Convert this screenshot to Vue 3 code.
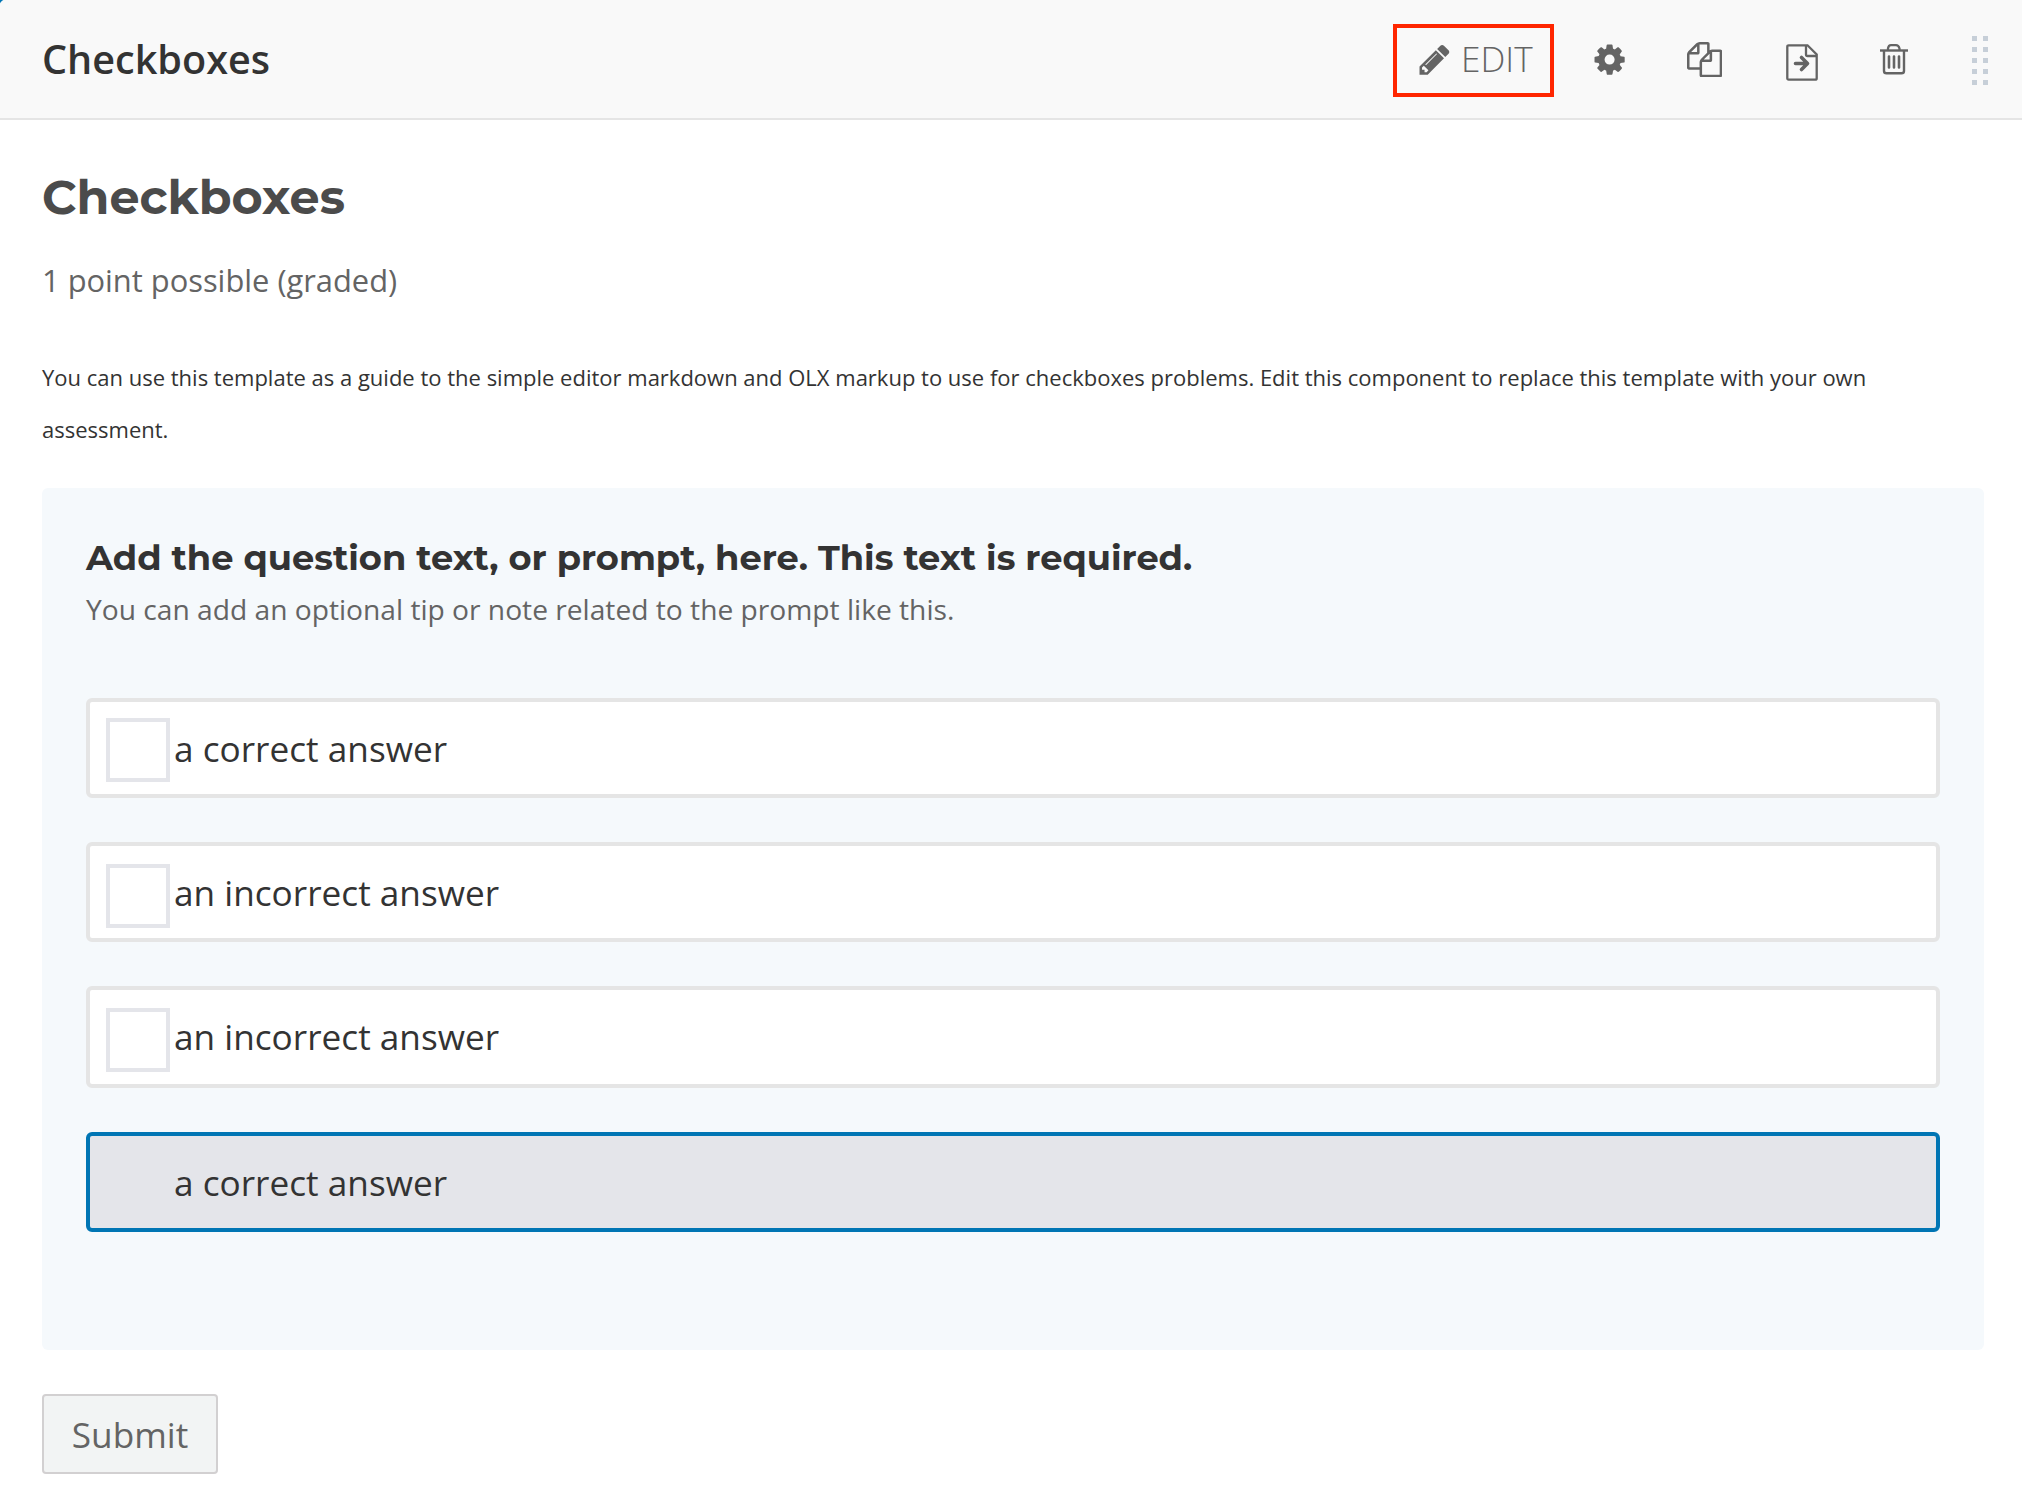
<script setup>
import { ref } from 'vue'

const title = 'Checkboxes'
const options = ref([
  { id: 1, label: 'a correct answer', selected: false },
  { id: 2, label: 'an incorrect answer', selected: false },
  { id: 3, label: 'an incorrect answer', selected: false },
  { id: 4, label: 'a correct answer', selected: true },
])
</script>

<template>
  <article class="component">
    <header class="bar">
      <span class="bar-title">{{ title }}</span>
      <div class="actions">
        <button class="edit" type="button">
          <svg class="icon" viewBox="0 0 1792 1792"><path d="M491 1536l91-91-235-235-91 91v107h128v128h107zm523-928q0-22-22-22-10 0-17 7l-542 542q-7 7-7 17 0 22 22 22 10 0 17-7l542-542q7-7 7-17zm-54-192l416 416-832 832h-416v-416zm683 96q0 53-37 90l-166 166-416-416 166-165q36-38 90-38 53 0 91 38l235 234q37 39 37 91z" /></svg>
          <span class="edit-label">EDIT</span>
        </button>
        <button class="tool gear" type="button" aria-label="Settings">
          <svg class="icon" viewBox="0 0 1792 1792"><path d="M1152 896q0-106-75-181t-181-75-181 75-75 181 75 181 181 75 181-75 75-181zm512-109v222q0 12-8 23t-20 13l-185 28q-19 54-39 91 35 50 107 138 10 12 10 25t-9 23q-27 37-99 108t-94 71q-12 0-26-9l-138-108q-44 23-91 38-16 136-29 186-7 28-36 28h-222q-14 0-24.500-8.500t-11.500-21.500l-28-184q-49-16-90-37l-141 107q-10 9-25 9-14 0-25-11-126-114-165-168-7-10-7-23 0-12 8-23 15-21 51-66.500t54-70.500q-27-50-41-99l-183-27q-13-2-21-12.500t-8-23.500v-222q0-12 8-23t19-13l186-28q14-46 39-92-40-57-107-138-10-12-10-24 0-10 9-23 26-36 98.500-107.500t94.500-71.500q13 0 26 10l138 107q44-23 91-38 16-136 29-186 7-28 36-28h222q14 0 24.500 8.500t11.500 21.500l28 184q49 16 90 37l142-107q9-9 24-9 13 0 25 10 129 119 165 170 7 8 7 22 0 12-8 23-15 21-51 66.500t-54 70.500q26 50 41 98l183 28q13 2 21 12.500t8 23.500z" /></svg>
        </button>
        <button class="tool copy" type="button" aria-label="Duplicate">
          <svg class="icon" viewBox="0 0 1792 1792"><path d="M1696 384q40 0 68 28t28 68v1216q0 40-28 68t-68 28h-960q-40 0-68-28t-28-68v-288h-544q-40 0-68-28t-28-68v-672q0-40 20-88t48-76l408-408q28-28 76-48t88-20h416q40 0 68 28t28 68v328q68-40 128-40h416zm-544 213l-299 299h299v-299zm-640-384l-299 299h299v-299zm196 647l316-316v-416h-384v416q0 40-28 68t-68 28h-416v640h512v-256q0-40 20-88t48-76zm956 804v-1152h-384v416q0 40-28 68t-68 28h-416v640h896z" /></svg>
        </button>
        <button class="tool move" type="button" aria-label="Move">
          <svg width="32" height="37" viewBox="0 0 32 37" fill="none" stroke="currentColor">
            <path d="M2.700 1.300H21.500L30.700 10.500V34.200Q30.700 35.700 29.200 35.700H2.700Q1.300 35.700 1.300 34.200V2.700Q1.300 1.300 2.700 1.300Z" stroke-width="2.300" />
            <path d="M20 1.300V10.500Q20 12 21.500 12H30.700" stroke-width="2.300" />
            <path d="M9.500 19.500H21M15.500 13.500L21.500 19.500L15.500 25.500" stroke-width="3.600" stroke-linecap="round" stroke-linejoin="round" />
          </svg>
        </button>
        <button class="tool trash" type="button" aria-label="Delete">
          <svg width="28" height="31" viewBox="0 0 28 31" fill="none" stroke="currentColor">
            <path d="M0 6.500H28" stroke-width="2.400" />
            <path d="M8 6.500V4.500Q8.500 1.200 11 1.200H16Q18.500 1.200 19.500 4.500V6.500" stroke-width="2.300" />
            <path d="M4 6.500V27Q4 29.300 6.500 29.300H21.500Q24 29.300 24 27V6.500" stroke-width="2.400" />
            <path d="M9 12.500V23.500M14 12.500V23.500M19 12.500V23.500" stroke-width="2.600" stroke-linecap="round" />
          </svg>
        </button>
        <div class="handle"><i v-for="n in 10" :key="n" class="dot"></i></div>
      </div>
    </header>

    <section class="body">
      <h2 class="heading">{{ title }}</h2>
      <p class="points">1 point possible (graded)</p>
      <p class="intro">You can use this template as a guide to the simple editor markdown and OLX markup to use for checkboxes problems. Edit this component to replace this template with your own assessment.</p>

      <div class="problem">
        <h3 class="prompt">Add the question text, or prompt, here. This text is required.</h3>
        <p class="hint">You can add an optional tip or note related to the prompt like this.</p>
        <div class="options">
          <label v-for="o in options" :key="o.id" class="option" :class="{ selected: o.selected }">
            <span class="box"></span>
            <span class="label">{{ o.label }}</span>
          </label>
        </div>
      </div>

      <button class="submit" type="button">Submit</button>
    </section>
  </article>
</template>

<style>
html,
body {
  background: #fff;
}
</style>

<style scoped>
.component {
  width: 2022px;
  height: 1492px;
  box-sizing: border-box;
  overflow: hidden;
  background: #fff;
  color: #333;
  font-family: "Open Sans", sans-serif;
}
button {
  margin: 0;
  padding: 0;
  border: 0;
  background: none;
  color: inherit;
  font-family: inherit;
}
.bar {
  display: flex;
  justify-content: space-between;
  height: 118px;
  padding-left: 42px;
  border-bottom: 2px solid #e5e5e5;
  background: radial-gradient(circle at 6px 6px, #f9f9f9 6px, #0075b4 7px) 0 0 / 4px 4px no-repeat #f9f9f9;
}
.bar-title {
  font-size: 39.6px;
  font-weight: 600;
  line-height: 118px;
}
.actions {
  display: flex;
  align-items: flex-start;
  padding-right: 34px;
  color: #646464;
}
.actions svg {
  display: block;
}
.icon {
  width: 35.2px;
  height: 35.2px;
  fill: currentColor;
}
.edit {
  display: flex;
  box-sizing: border-box;
  width: 161px;
  height: 73px;
  margin-top: 24px;
  padding: 14px 0 0 20px;
  border: 4px solid #ff2600;
}
.edit-label {
  margin-left: 8.8px;
  font-size: 35.2px;
  font-weight: 300;
  line-height: 32px;
}
.gear {
  margin: 42px 0 0 38px;
}
.copy {
  margin: 42px 0 0 59.6px;
}
.move {
  margin: 44px 0 0 64px;
}
.trash {
  margin: 44px 0 0 62px;
}
.handle {
  display: grid;
  grid-template-columns: 5px 5px;
  gap: 6px;
  margin: 36px 0 0 64px;
}
.dot {
  height: 5px;
  background: #c7cfd8;
}
.body {
  padding: 47px 38px 0 42px;
}
.heading {
  margin: 0;
  color: #4b4b4b;
  font: 700 47.6px/60px Montserrat, sans-serif;
}
.points {
  margin: 32px 0 0;
  color: #646464;
  font-size: 30.85px;
  line-height: 42px;
}
.intro {
  margin: 50px 0 0;
  font-size: 22.01px;
  line-height: 52px;
}
.problem {
  box-sizing: border-box;
  height: 862px;
  margin-top: 33px;
  padding: 48px 44px 0;
  border-radius: 6px;
  background: #f5f9fc;
}
.prompt {
  margin: 0;
  font: 700 35.22px/44px Montserrat, sans-serif;
}
.hint {
  margin: 9px 0 0;
  color: #646464;
  font-size: 28.18px;
  line-height: 40px;
}
.options {
  display: flex;
  flex-direction: column;
  gap: 44px;
  margin-top: 69px;
}
.option {
  display: flex;
  align-items: flex-start;
  box-sizing: border-box;
  height: 100px;
  padding-left: 16px;
  border: 4px solid #e5e5e5;
  border-radius: 6px;
  background: #fff;
}
.option:nth-child(3) {
  height: 102px;
}
.box {
  box-sizing: border-box;
  width: 64px;
  height: 64px;
  margin-top: 18px;
  border: 4px solid #e4e5ea;
}
.option:first-child .box {
  margin-top: 16px;
}
.label {
  margin-left: 4px;
  font-size: 35.2px;
  line-height: 92px;
}
.selected {
  border-color: #0075b4;
  background: #e4e5ea;
}
.submit {
  display: block;
  box-sizing: border-box;
  width: 176px;
  height: 80px;
  margin-top: 44px;
  border: 2px solid #d2d0d1;
  border-radius: 4px;
  background: #f2f4f4;
  color: #646464;
  font-size: 35.2px;
  line-height: 76px;
}
</style>
